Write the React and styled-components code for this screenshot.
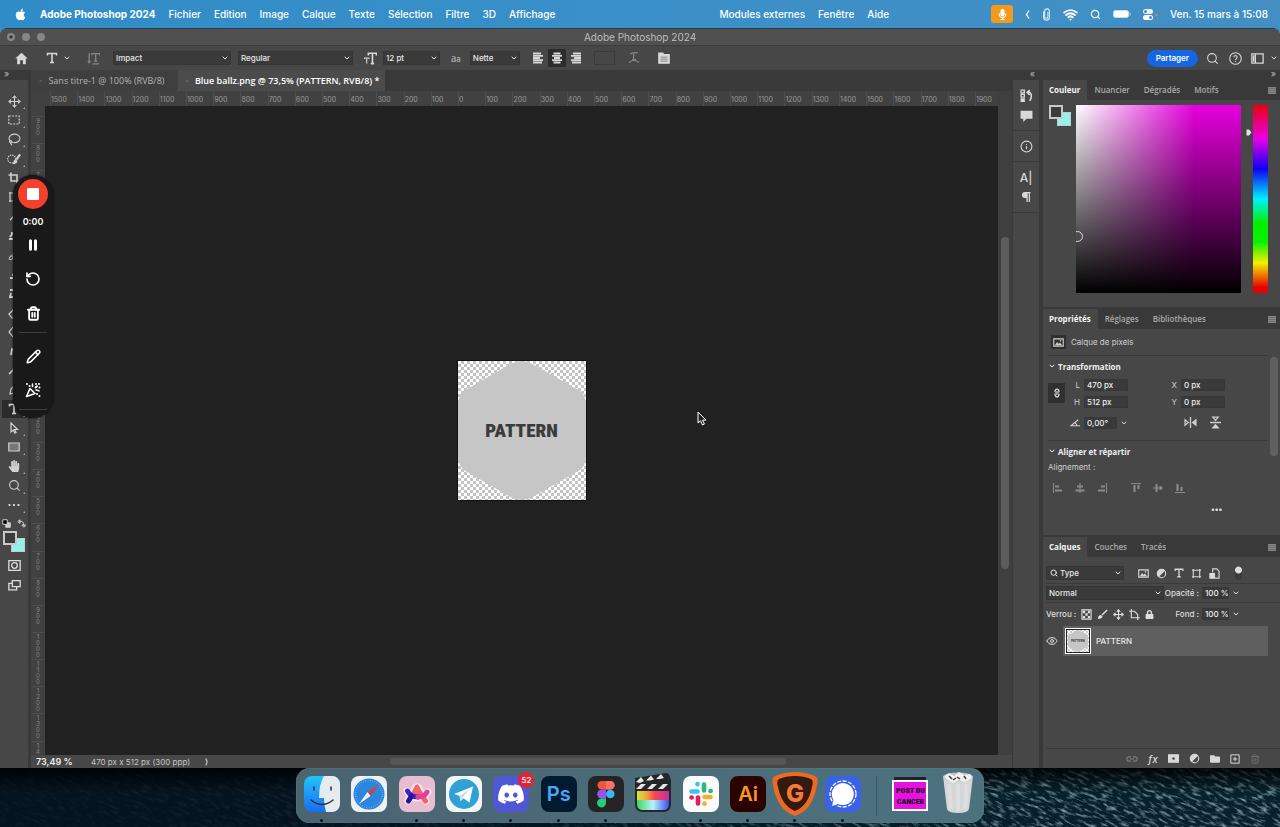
import styled, { createGlobalStyle, css } from "styled-components";
import {
  Brush,
  ChevronDown,
  Eye,
  Info,
  Lasso,
  Move,
  Pencil,
  RotateCcw,
  Search,
  Trash2,
  Wifi,
} from "lucide-react";
import { FaApple, FaDiscord, FaFolder, FaHandPaper, FaLock, FaMicrophone } from "react-icons/fa";

const colors = {
  menu: "#3b91c9",
  title: "#505050",
  panel: "#474747",
  header: "#393939",
  field: "#3a3a3a",
  line: "#3b3b3b",
  canvas: "#212121",
  text: "#dedede",
  muted: "#a9a9a9",
};

const uiFont = `Inter, "Liberation Sans", sans-serif`;
const panelFont = `"Open Sans", "Noto Sans", sans-serif`;
const posterFont = `Impact, "Roboto Condensed", "Open Sans Condensed", Roboto, sans-serif`;

const GlobalStyle = createGlobalStyle`
  * {
    box-sizing: border-box;
  }
  body {
    margin: 0;
    background: #04131d;
    font-family: ${uiFont};
  }
  button, input, select {
    font: inherit;
    color: inherit;
    border: 0;
    margin: 0;
    padding: 0;
    background: none;
    border-radius: 0;
  }
  svg {
    display: block;
    flex: none;
  }
`;

const Desktop = styled.div`
  position: relative;
  display: flex;
  flex-direction: column;
  min-height: 100vh;
  background: ${colors.menu};
  overflow: hidden;
`;

/* ---------- barra de menus ---------- */

const MenuBar = styled.header`
  display: flex;
  align-items: center;
  height: 28px;
  padding: 0 12px 0 14px;
  background: linear-gradient(90deg, #308cc7, #3a90c8 50%, #438fc4);
  color: #fff;
  font-size: 10px;
`;

const MenuGroup = styled.nav`
  display: flex;
  align-items: center;
  gap: 13px;
  margin-left: ${props => (props.$right ? "auto" : "0")};
`;

const MenuItem = styled.button`
  font-weight: ${props => (props.$bold ? 700 : 500)};
  white-space: nowrap;
`;

const StatusArea = styled.div`
  display: flex;
  align-items: center;
  gap: 12px;
  margin-left: 102px;
`;

const MicBadge = styled.button`
  display: grid;
  place-items: center;
  width: 22px;
  height: 18px;
  border-radius: 3px;
  background: #f39a1c;
`;

/* ---------- janela ---------- */

const Window = styled.main`
  flex: 1;
  display: flex;
  flex-direction: column;
  min-height: 0;
  border-radius: 8px 8px 0 0;
  overflow: hidden;
  background: ${colors.header};
  color: ${colors.text};
`;

const TitleBar = styled.div`
  position: relative;
  height: 17px;
  background: ${colors.title};
  border-top: 1px solid #2a3d49;
  color: #bdbdbd;
  font-size: 10px;
  line-height: 17px;
  text-align: center;
`;

const Lights = styled.div`
  position: absolute;
  left: 7px;
  top: 4px;
  display: flex;
  gap: 7px;
`;

const Light = styled.span`
  width: 8px;
  height: 8px;
  border-radius: 50%;
  background: ${props => (props.$dot ? "radial-gradient(#333 20%, #868686 35%)" : "#868686")};
`;

const OptionsBar = styled.div`
  display: flex;
  align-items: center;
  height: 25px;
  padding: 0 2px 0 14px;
  background: ${colors.panel};
  border-top: 1px solid #3d3d3d;
`;

const OptButton = styled.button`
  display: grid;
  place-items: center;
  width: ${props => props.$w || 18}px;
  height: 18px;
  margin-left: ${props => props.$ml || 0}px;
  background: ${props => (props.$on ? "#2c2c2c" : "none")};
  color: ${props => (props.$dim ? "#858585" : "#d8d8d8")};
  font-size: 12px;
  font-weight: 500;
  white-space: nowrap;
`;

const AntiAlias = styled.span`
  display: flex;
  align-items: baseline;
  margin: 0 9px 0 11px;
  color: #bdbdbd;
  font-family: "Liberation Serif", serif;
  font-size: 12px;
  small {
    font-family: ${uiFont};
    font-size: 8px;
  }
`;

const SelectBox = styled.label`
  position: relative;
  display: flex;
  width: ${props => props.$w}px;
  height: 14px;
  margin-left: ${props => props.$ml || 0}px;
  background: ${colors.field};
  border: 1px solid #353535;
  color: #e6e6e6;
  font-size: 8px;
  font-weight: 500;
  select {
    flex: 1;
    min-width: 0;
    padding: 0 12px 0 ${props => props.$pl || 2}px;
    appearance: none;
  }
  svg {
    position: absolute;
    right: 1px;
    top: 2px;
    pointer-events: none;
  }
  svg:first-child {
    left: 3px;
    right: auto;
  }
`;

const ColorChip = styled.button`
  width: 21px;
  height: 14px;
  margin-left: 9px;
  border: 1px solid #3b3b3b;
`;

const ShareButton = styled.button`
  height: 17px;
  margin-left: auto;
  padding: 0 9px;
  border-radius: 9px;
  background: #1566e0;
  color: #fff;
  font-size: 8px;
  font-weight: 600;
`;

const Body = styled.div`
  flex: 1;
  display: flex;
  min-height: 0;
`;

const Strip = styled.div`
  height: 10px;
  padding: 0 4px;
  background: ${colors.header};
  color: #bbb;
  font-size: 9px;
  line-height: 8px;
  text-align: ${props => props.$align || "left"};
`;

const ToolColumn = styled.aside`
  width: 31px;
  flex: none;
  display: flex;
  flex-direction: column;
  border-right: 3px solid ${colors.header};
  background: ${colors.panel};
`;

const Tools = styled.div`
  display: flex;
  flex-direction: column;
  align-items: center;
  justify-content: space-between;
  height: 434px;
  padding-top: 12px;
`;

const ToolButton = styled.button`
  position: relative;
  display: grid;
  place-items: center;
  width: 24px;
  height: 18px;
  color: #d0d0d0;
  background: ${props => (props.$on ? "#2b2b2b" : "none")};
  &::after {
    content: "";
    position: absolute;
    right: 1px;
    bottom: 1px;
    border: 1px solid #aaa;
    border-left-color: transparent;
    border-top-color: transparent;
  }
`;

const ToolExtras = styled.div`
  display: flex;
  flex-direction: column;
  align-items: center;
  gap: 7px;
  padding-top: 5px;
`;

const MiniRow = styled.div`
  display: flex;
  gap: 6px;
  margin-bottom: -4px;
`;

const Swatches = styled.div`
  display: grid;
  grid-template-columns: 8px 6px 8px;
  grid-template-rows: 7px 7px 7px;
`;

const Swatch = styled.button`
  border: ${props => (props.$front ? "2px solid #c9c9c9" : "1px solid #c9c9c9")};
  background: ${props => (props.$front ? "#3b3b3b" : "#93f3ea")};
  grid-column: ${props => (props.$front ? "1 / 3" : "2 / 4")};
  grid-row: ${props => (props.$front ? "1 / 3" : "2 / 4")};
  z-index: ${props => (props.$front ? 1 : 0)};
`;

/* ---------- documento ---------- */

const Center = styled.section`
  flex: 1;
  min-width: 0;
  display: flex;
  flex-direction: column;
`;

const DocTabs = styled.div`
  display: flex;
  height: 21px;
  background: ${colors.header};
  font-family: ${panelFont};
  font-size: 9px;
`;

const DocTab = styled.button`
  display: flex;
  align-items: center;
  gap: 6px;
  padding: 0 ${props => (props.$on ? "6px 0 7px" : "14px 0 8px")};
  background: ${props => (props.$on ? "#4b4b4b" : "#3f3f3f")};
  color: ${props => (props.$on ? "#fff" : "#b4b4b4")};
  font-weight: ${props => (props.$on ? 600 : 500)};
  white-space: nowrap;
  i {
    color: #777;
    font-style: normal;
    font-size: 6px;
  }
`;

const Workspace = styled.div`
  flex: 1;
  display: grid;
  grid-template-columns: 14px 1fr 14px;
  grid-template-rows: 15px 1fr 13px;
  min-height: 0;
  background: #424242;
`;

const RulerX = styled.div`
  display: flex;
  grid-column: 1 / 3;
  padding-left: 19px;
  background: #414141;
  overflow: hidden;
  color: #9a9a9a;
  font-size: 7px;
  line-height: 18px;
  span {
    flex: 20 1 0;
    min-width: 0;
    border-left: 1px solid #4d4d4d;
    white-space: nowrap;
  }
  span:last-child {
    flex-grow: 17;
  }
`;

const RulerY = styled.div`
  display: flex;
  flex-direction: column;
  padding-top: 10px;
  background: #414141;
  overflow: hidden;
  color: #858585;
  font-size: 6px;
  line-height: 6px;
  text-align: center;
  span {
    flex: 2 1 0;
    min-height: 0;
    border-top: 1px solid #4d4d4d;
    padding: 1px 5px 0;
    word-break: break-all;
  }
  span:last-child {
    flex-grow: 1;
  }
`;

const Canvas = styled.div`
  position: relative;
  display: grid;
  place-items: center;
  background: ${colors.canvas};
`;

const Artboard = styled.div`
  display: grid;
  place-items: center;
  width: 130px;
  height: 141px;
  border: 1px solid #111;
  background: repeating-conic-gradient(#c3c3c3 0 25%, #fff 0 50%) 0 0 / 6px 6px;
  > * {
    grid-area: 1 / 1;
  }
`;

const PatternWord = styled.span`
  color: #3b3b3b;
  font-family: ${posterFont};
  font-size: 19px;
  font-weight: 900;
`;

const Pointer = styled.svg`
  position: absolute;
  left: 68%;
  top: 47%;
  margin-left: 4px;
`;

const ScrollY = styled.div`
  grid-row: 1 / 3;
  grid-column: 3;
  padding: 146px 3px 0;
  background: #3f3f3f;
  div {
    width: 8px;
    height: 332px;
    border-radius: 4px;
    background: #5c5c5c;
  }
`;

const StatusBar = styled.footer`
  grid-column: 1 / 4;
  display: flex;
  align-items: center;
  padding-left: 5px;
  background: ${colors.panel};
  color: #c4c4c4;
  font-size: 8px;
  b {
    width: 55px;
    color: #eee;
    font-size: 9px;
    font-weight: 600;
  }
  svg {
    margin-left: 13px;
  }
`;

const ScrollX = styled.div`
  flex: 1;
  display: flex;
  margin-left: 7px;
  padding: 0 226px 0 172px;
  div {
    flex: 1;
    height: 7px;
    border-radius: 4px;
    background: #575757;
  }
`;

/* ---------- paineis ---------- */

const IconDock = styled.aside`
  flex: none;
  width: 31px;
  border-right: 4px solid ${colors.header};
  border-left: 1px solid ${colors.header};
  background: ${colors.panel};
`;

const DockGroup = styled.div`
  display: flex;
  flex-direction: column;
  align-items: center;
  gap: 2px;
  padding: 6px 0;
  border-bottom: 1px solid #3a3a3a;
`;

const Panels = styled.aside`
  flex: none;
  width: 237px;
  display: flex;
  flex-direction: column;
  gap: 2px;
  background: ${colors.header};
  font-size: 8px;
`;

const Panel = styled.section`
  flex: ${props => (props.$grow ? "1" : "none")};
  display: flex;
  flex-direction: column;
  background: ${colors.panel};
`;

const PanelTabs = styled.div`
  display: flex;
  height: 20px;
  padding-right: 4px;
  background: ${colors.header};
  font-family: ${panelFont};
  align-items: stretch;
  svg {
    margin: auto 0 auto auto;
  }
`;

const PanelTab = styled.button`
  padding: 0 7px 1px ${props => (props.$on ? 6 : 7)}px;
  font-size: 8px;
  font-weight: ${props => (props.$on ? 700 : 600)};
  color: ${props => (props.$on ? "#f4f4f4" : colors.muted)};
  background: ${props => (props.$on ? colors.panel : "none")};
`;

const ColorBody = styled.div`
  display: flex;
  align-items: flex-start;
  height: 207px;
  padding: 5px 12px 0 6px;
`;

const ColorField = styled.div`
  position: relative;
  flex: 1;
  height: 188px;
  margin: 0 8px 0 5px;
  overflow: hidden;
  background: linear-gradient(transparent, #000), linear-gradient(90deg, #fff, #e600dc 72%);
  &::after {
    content: "";
    position: absolute;
    left: -4px;
    top: 126px;
    width: 9px;
    height: 9px;
    border: 1px solid #ddd;
    border-radius: 50%;
  }
`;

const HueArrow = styled.svg`
  margin: 24px 0 0 -3px;
`;

const Hue = styled.div`
  width: 15px;
  height: 188px;
  margin-left: 1px;
  background: linear-gradient(#e8000c, #e800e8 18%, #1000f0 34%, #00f0ff 50%, #00f000 63%, #0cf000 73%, #f2f000 84%, #e80000 97%);
`;

const PropsBody = styled.div`
  position: relative;
  height: 206px;
  padding: 0 12px 0 5px;
  color: #cfcfcf;
`;

const Row = styled.div`
  display: flex;
  align-items: center;
  height: ${props => props.$h || 18}px;
  gap: ${props => props.$gap || 0}px;
  padding-left: ${props => props.$pl || 0}px;
  border-bottom: ${props => (props.$line ? `1px solid ${colors.line}` : "0")};
`;

const SectionTitle = styled.button`
  display: flex;
  align-items: center;
  gap: 2px;
  height: 20px;
  color: #eee;
  font-family: ${panelFont};
  font-size: 8px;
  font-weight: 700;
`;

const TypeIcon = styled.span`
  display: grid;
  place-items: center;
  width: 15px;
  height: 14px;
  background: #303030;
`;

const Transform = styled.div`
  display: grid;
  grid-template-columns: 18px 62px 35px 62px;
  grid-template-rows: 17px 17px 25px;
  align-items: center;
  align-content: start;
  height: 64px;
`;

const LinkButton = styled.button`
  grid-row: 1 / 3;
  display: grid;
  place-items: center;
  width: 17px;
  height: 20px;
  background: #303030;
`;

const Field = styled.label`
  display: flex;
  align-items: center;
  justify-content: flex-end;
  gap: ${props => props.$gap || 4}px;
  grid-column: ${props => props.$col || "auto"};
  margin: ${props => (props.$end ? "0 40px 0 auto" : "0")};
  input {
    width: ${props => props.$w || 44}px;
    height: 12px;
    padding-left: 2px;
    border: 1px solid #373737;
    background: ${colors.field};
    color: #eee;
    font-size: 8px;
    font-weight: 500;
  }
`;

const FlipRow = styled.div`
  grid-column: 4;
  display: flex;
  gap: 12px;
  padding-left: 21px;
`;

const AlignRow = styled.div`
  display: flex;
  gap: 10px;
  height: 32px;
  padding-left: 4px;
  align-items: center;
  color: #8b8b8b;
  svg:nth-child(4) {
    margin-left: 12px;
  }
`;

const More = styled.button`
  display: block;
  margin-left: 163px;
  color: #ddd;
  font-size: 8px;
  font-weight: 700;
`;

const PanelScroll = styled.div`
  position: absolute;
  right: 2px;
  top: 28px;
  width: 8px;
  height: 99px;
  border-radius: 4px;
  background: #606060;
`;

const LayersBody = styled.div`
  flex: 1;
  display: flex;
  flex-direction: column;
  padding: 6px 0 0 3px;
  font-weight: 500;
`;

const Filters = styled.div`
  display: flex;
  align-items: center;
  gap: 7px;
  margin-left: 14px;
  color: #d8d8d8;
`;

const FilterToggle = styled.button`
  width: 7px;
  height: 14px;
  margin-left: 8px;
  border-radius: 3px;
  background: radial-gradient(circle at 50% 4px, #ddd 3px, #3a3a3a 4px);
`;

const Layer = styled.div`
  display: flex;
  align-items: center;
  height: 30px;
  margin: 1px 12px 0 0;
`;

const LayerMain = styled.button`
  flex: 1;
  display: flex;
  align-items: center;
  gap: 5px;
  height: 30px;
  margin-left: 5px;
  padding-left: 2px;
  background: #5f5f5f;
  color: #e8e8e8;
`;

const Thumb = styled.span`
  display: grid;
  place-items: center;
  width: 26px;
  height: 26px;
  border: 1px solid #fff;
  outline: 1px solid #222;
  outline-offset: -2px;
  background: repeating-conic-gradient(#ccc 0 25%, #fff 0 50%) 0 0 / 4px 4px;
  > * {
    grid-area: 1 / 1;
  }
  small {
    color: #333;
    font-size: 3px;
    font-weight: 700;
  }
`;

const LayerFooter = styled.div`
  display: flex;
  align-items: center;
  justify-content: flex-end;
  gap: 10px;
  height: 20px;
  margin-top: auto;
  padding-right: 20px;
  border-top: 1px solid ${colors.line};
  color: #d8d8d8;
`;

const Fx = styled.button`
  width: 10px;
  font-size: 10px;
  font-style: italic;
`;

/* ---------- gravador ---------- */

const Recorder = styled.div`
  position: absolute;
  left: 13px;
  top: 175px;
  z-index: 2;
  display: flex;
  flex-direction: column;
  align-items: center;
  width: 40px;
  padding: 4px 0 2px;
  border-radius: 20px;
  background: #191919;
  box-shadow: 0 0 2px #000;
  color: #fff;
  hr {
    width: 28px;
    height: 1px;
    margin: 2px 0 6px;
    border: 0;
    background: #3d3d3d;
  }
`;

const RecordButton = styled.button`
  display: grid;
  place-items: center;
  width: 30px;
  height: 30px;
  border-radius: 50%;
  background: #f5402c;
  &::after {
    content: "";
    width: 12px;
    height: 12px;
    border-radius: 1px;
    background: #fff;
  }
`;

const Timer = styled.span`
  height: 15px;
  margin-top: 4px;
  font-size: 9px;
  font-weight: 600;
  line-height: 17px;
`;

const RecButton = styled.button`
  display: grid;
  place-items: center;
  width: 34px;
  height: 34px;
`;

/* ---------- dock ---------- */

const DockArea = styled.div`
  position: relative;
  display: flex;
  justify-content: center;
  height: 59px;
  background: linear-gradient(90deg, #03131f, #051c29 50%, #07222d);
`;

const Water = styled.svg`
  position: absolute;
  inset: 0;
  width: 100%;
  height: 100%;
`;

const Dock = styled.nav`
  position: relative;
  display: flex;
  justify-content: space-between;
  width: 688px;
  max-width: 96%;
  height: 55px;
  padding: 8px 8px 0;
  border-radius: 14px;
  background: linear-gradient(90deg, #4a6470, #4b6c78 50%, #4c7280);
  box-shadow: inset 0 0 1px #8aa;
`;

const DockApp = styled.button`
  position: relative;
  width: 36px;
  height: 36px;
  border-radius: 8px;
  background: ${props => props.$bg || "none"};
  color: ${props => props.$fg || "#fff"};
  font-size: 20px;
  font-weight: 600;
  line-height: 36px;
  text-align: center;
  text-decoration: none;
  svg {
    width: 100%;
    height: 100%;
    overflow: visible;
  }
  ${props =>
    props.$open &&
    css`
      &::after {
        content: "";
        position: absolute;
        left: 16px;
        top: 43px;
        width: 3px;
        height: 3px;
        border-radius: 50%;
        background: #0a0f12;
      }
    `}
`;

const DiscordFace = styled(FaDiscord)`
  padding: 4px;
`;

const Badge = styled.span`
  position: absolute;
  right: -5px;
  top: -4px;
  width: 16px;
  height: 16px;
  border-radius: 50%;
  background: #df2438;
  color: #fff;
  font-size: 8px;
  font-weight: 500;
  line-height: 16px;
`;

const DockRule = styled.span`
  width: 1px;
  height: 40px;
  margin: 0 4px;
  background: #3a5664;
`;

const Poster = styled.span`
  display: block;
  margin-top: 4px;
  border: 2px solid #fff;
  background: #e812e0;
  color: #1c0a1c;
  font-family: ${posterFont};
  font-size: 8px;
  font-weight: 900;
  line-height: 11px;
  padding: 3px 0 2px;
  white-space: nowrap;
  box-shadow: 0 -5px 0 -2px #222;
`;

const Chevron = ({ size = 8 }) => <ChevronDown size={size} strokeWidth={3} />;

const Glyph = ({ size = 12, children, ...rest }) => (
  <svg
    width={size}
    height={size}
    viewBox="0 0 12 12"
    fill="none"
    stroke="currentColor"
    strokeWidth="1.2"
    {...rest}
  >
    {children}
  </svg>
);

const MenuIcon = () => (
  <svg width="8" height="7" viewBox="0 0 8 7">
    <path d="M0 0h8v7H0z" fill="#707070" />
    <path d="M0 .5h8M0 2.5h8M0 4.5h8M0 6.5h8" stroke="#858585" />
  </svg>
);

const TypeT = ({ size = 12 }) => (
  <Glyph size={size}>
    <path d="M1.5 3.5V1.5h9v2M6 1.5v9M4 10.5h4" strokeWidth="1.6" />
  </Glyph>
);

const lines = {
  left: "M1 1.5h8M1 3.8h10M1 6h7M1 8.2h10M1 10.5h9",
  center: "M2.5 1.5h7M1 3.8h10M3 6h6M1 8.2h10M2.5 10.5h7",
  right: "M3 1.5h8M1 3.8h10M4 6h7M1 8.2h10M2 10.5h9",
};

const TextLines = ({ align }) => (
  <Glyph>
    <path d={lines[align]} strokeWidth="1.8" />
  </Glyph>
);

const CircleHalf = ({ size = 11 }) => (
  <Glyph size={size}>
    <circle cx="6" cy="6" r="4.6" />
    <path d="M2.8 9.2A4.6 4.6 0 0 1 9.2 2.8z" fill="currentColor" />
  </Glyph>
);

const Picture = ({ size = 11 }) => (
  <Glyph size={size}>
    <path d="M.8 2h10.4v8H.8z" />
    <path d="M2 9l2.5-3.5L6.2 7.6 7.6 6 10 9z" fill="currentColor" stroke="none" />
    <circle cx="8.2" cy="4.2" r=".9" fill="currentColor" stroke="none" />
  </Glyph>
);

const LinkGlyph = ({ dim }) => (
  <Glyph size={12} color={dim ? "#7c7c7c" : "#ddd"}>
    {dim ? (
      <path d="M5 3.8H3a2.2 2.2 0 0 0 0 4.4h2M7 3.8h2a2.2 2.2 0 0 1 0 4.4H7M4 6h4" />
    ) : (
      <path d="M4.5 5.5a2 2 0 1 1 3 0M4.500 6.500a2 2 0 1 0 3 0M6 4v4" />
    )}
  </Glyph>
);

const AlignIcon = ({ d }) => (
  <Glyph size={12}>
    <path d={d} strokeWidth="1.1" />
  </Glyph>
);

const Hexagon = ({ width, height }) => (
  <svg width={width} height={height} viewBox="0 0 127 138">
    <path
      d="M52 3Q63-3 74 3L120 29Q127 34 127 43V95Q127 104 120 109L74 135Q63 141 52 135L7 109Q0 104 0 95V43Q0 34 7 29Z"
      fill="#c6c6c6"
    />
  </svg>
);

const tools = [
  ["Déplacement", <Move size={13} />],
  ["Rectangle de sélection", <Glyph><path d="M.8 2h10.4v8H.8z" strokeDasharray="2 1.2" /></Glyph>],
  ["Lasso", <Lasso size={13} />],
  ["Sélection rapide", <Glyph size={14}><circle cx="4" cy="6" r="3.4" strokeDasharray="1.2 .8" strokeWidth="1" /><path d="M8 6.5L11.200 2" strokeWidth="2" /><path d="M5 10.500q.5-4 2.500-4l1.500 1.300q-.5 2.700-4 2.700z" fill="currentColor" stroke="none" /></Glyph>],
  ["Recadrage", <Glyph><path d="M3 .5V9h8.5M.5 3H9v8.5" strokeWidth="1.6" /></Glyph>],
  ["Cadre", <Glyph><path d="M2 1v10M10 1v10M1 2h10M1 10h10" /></Glyph>],
  ["Pipette", <Glyph><path d="M2 10l5-5M6 3l3 3M8 4l2-2" /></Glyph>],
  ["Correcteur", <Glyph><path d="M1 9h5M2 7l3-4M3 3h4" strokeWidth="2" /></Glyph>],
  ["Pinceau", <Brush size={12} />],
  ["Tampon", <Glyph><path d="M2 10h8M4 7h4M6 7V3" strokeWidth="2" /></Glyph>],
  ["Forme d'historique", <Glyph><path d="M2 3h5M3 6l-1 4h4" strokeWidth="1.8" /></Glyph>],
  ["Gomme", <Glyph><path d="M1 7l5-5 4 4-5 5H4z" /></Glyph>],
  ["Dégradé", <Glyph><path d="M5 1L1 6l4 5" /></Glyph>],
  ["Doigt", <Glyph><path d="M3 10l1-6 4 3" strokeWidth="1.8" /></Glyph>],
  ["Densité", <Glyph><path d="M1 10l5-5" strokeWidth="1.6" /></Glyph>],
  ["Plume", <Glyph><path d="M2 10l1-5 3-3 3 3-3 4z" /></Glyph>],
  ["Texte", <TypeT />, true],
  ["Sélection de tracé", <Glyph><path d="M3 1v9l2.3-2 1.6 3.2 1.2-.6L6.6 7.5h3z" /></Glyph>],
  ["Rectangle", <Glyph><path d="M.8 2h10.4v8H.8z" fill="#777" /></Glyph>],
  ["Main", <FaHandPaper size={12} />],
  ["Zoom", <Search size={13} />],
  ["Autres outils", <Glyph><path d="M.5 6h2M5 6h2M9.5 6h2" strokeWidth="2" /></Glyph>],
];

const rulerX = Array.from({ length: 35 }, (_, i) => Math.abs(i - 15) * 100);
// the last mark only has room for its first two digits
const rulerY = Array.from({ length: 24 }, (_, i) => String(Math.abs(i - 9) * 100)).map((n, i) =>
  i === 23 ? n.slice(0, 2) : n
);

const menus = ["Fichier", "Edition", "Image", "Calque", "Texte", "Sélection", "Filtre", "3D", "Affichage"];

const alignIcons = [
  "M1.5 1v10M3 4h4M3 5h4M3 8h7M3 9h7",
  "M6 1v10M3 4h6M3 5h6M1.5 8h9M1.5 9h9",
  "M10.5 1v10M5 4h4M5 5h4M2 8h7M2 9h7",
  "M1 1.5h10M4 3v7M5 3v7M8 3v4M9 3v4",
  "M1 6h10M4 2v8M5 2v8M8 4v4M9 4v4",
  "M1 10.5h10M3 2v7M4 2v7M7 5v4M8 5v4",
];

const SelectField = ({ label, value, w, ml, pl, icon }) => (
  <SelectBox $w={w} $ml={ml} $pl={pl}>
    {icon}
    <select aria-label={label} defaultValue={value}>
      <option>{value}</option>
    </select>
    <Chevron />
  </SelectBox>
);

const ColorPair = () => (
  <Swatches>
    <Swatch $front aria-label="Premier plan" />
    <Swatch aria-label="Arrière-plan" />
  </Swatches>
);

const TopMenu = () => (
  <MenuBar>
    <MenuGroup>
      <FaApple size={13} />
      <MenuItem $bold>Adobe Photoshop 2024</MenuItem>
      {menus.map(m => (
        <MenuItem key={m}>{m}</MenuItem>
      ))}
    </MenuGroup>
    <MenuGroup $right>
      <MenuItem>Modules externes</MenuItem>
      <MenuItem>Fenêtre</MenuItem>
      <MenuItem>Aide</MenuItem>
    </MenuGroup>
    <StatusArea>
      <MicBadge aria-label="Micro">
        <FaMicrophone size={11} />
      </MicBadge>
      <svg width="5" height="9" viewBox="0 0 5 9" fill="none" stroke="#fff" strokeWidth="1.3">
        <path d="M4 .5L1.500 4.500 4 8.500" />
      </svg>
      <svg width="9" height="13" viewBox="0 0 7 12" fill="none" stroke="#d6e8f5">
        <path d="M.8 3v5.500a2.700 2.700 0 0 0 5.400 0V3a2.200 2.200 0 0 0-4.400 0v5a1.500 1.500 0 0 0 3 0V3.500" />
      </svg>
      <Wifi size={15} strokeWidth={3} />
      <Search size={11} strokeWidth={2.5} />
      <svg width="18" height="8" viewBox="0 0 18 8">
        <rect x=".5" y=".5" width="15" height="7" rx="2" fill="#fff" stroke="#c5ddec" />
        <path d="M17 2.500v3" stroke="#b7d4e8" />
      </svg>
      <svg width="15" height="11" viewBox="0 0 15 11">
        <rect x="0" y="0" width="10" height="5" rx="2.500" fill="#e9f3fa" />
        <rect x="0" y="6" width="10" height="5" rx="2.500" fill="#fff" />
        <circle cx="2.500" cy="2.500" r="1.500" fill="#3b8fc6" />
        <circle cx="7.500" cy="8.500" r="1.500" fill="#3b8fc6" />
        <circle cx="13.500" cy="6" r="1.200" fill="#e08a35" />
      </svg>
      <MenuItem>Ven. 15 mars à 15:08</MenuItem>
    </StatusArea>
  </MenuBar>
);

const Options = () => (
  <OptionsBar>
    <OptButton $w={14} aria-label="Accueil">
      <Glyph size={13}>
        <path d="M6 .8L11.700 6H10v5.200H7.300V7.500H4.700v3.700H2V6H.3z" fill="currentColor" stroke="none" />
      </Glyph>
    </OptButton>
    <OptButton $w={22} $ml={13} aria-label="Outil texte">
      <TypeT size={12} />
    </OptButton>
    <Chevron />
    <OptButton $ml={13} $dim aria-label="Orientation du texte">
      <Glyph size={13}>
        <path d="M2 1v9M.8 8.500L2 10l1.200-1.500M4.500 3V1.500h7V3M8 1.500v7M6.500 8.500h3M5 11h6" />
      </Glyph>
    </OptButton>
    <SelectField label="Police" value="Impact" w={118} ml={11} />
    <SelectField label="Style" value="Regular" w={115} ml={7} />
    <OptButton $ml={8} aria-label="Corps">
      <Glyph size={13}>
        <path d="M4 3.200V1.200h7.500v2M7.800 1.200v9.500M6.300 10.700h3" strokeWidth="1.500" />
        <path d="M.5 6.500V5.500h4v1M2.500 5.500v5" strokeWidth="1" />
      </Glyph>
    </OptButton>
    <SelectField label="Taille" value="12 pt" w={57} ml={4} />
    <AntiAlias>
      a<small>a</small>
    </AntiAlias>
    <SelectField label="Lissage" value="Nette" w={50} />
    <OptButton $ml={9} aria-label="Gauche">
      <TextLines align="left" />
    </OptButton>
    <OptButton $on $ml={1} aria-label="Centre">
      <TextLines align="center" />
    </OptButton>
    <OptButton $ml={1} aria-label="Droite">
      <TextLines align="right" />
    </OptButton>
    <ColorChip aria-label="Couleur du texte" />
    <OptButton $ml={10} $dim aria-label="Déformer">
      <Glyph>
        <path d="M2 2q4-2 8-1M6 1.500Q5 5 6 8M1 10.500q5-4 10 0M4 7.500h4" />
      </Glyph>
    </OptButton>
    <OptButton $ml={12} aria-label="Panneaux">
      <Glyph>
        <path d="M.8 1h4l1 1.500h5.400v8.700H.8z" fill="currentColor" />
        <path d="M2.500 5.200h7M2.500 7.200h7M2.500 9.200h7" stroke="#777" strokeWidth=".8" />
      </Glyph>
    </OptButton>
    <ShareButton>Partager</ShareButton>
    <OptButton $ml={5} aria-label="Rechercher">
      <Search size={13} />
    </OptButton>
    <OptButton $ml={5} aria-label="Aide">
      <Glyph size={13}>
        <circle cx="6" cy="6" r="5.300" strokeWidth="1" />
        <path d="M4.500 4.800a1.500 1.500 0 1 1 2.200 1.400Q6 6.600 6 7.300M6 8.300v1" strokeWidth="1" />
      </Glyph>
    </OptButton>
    <OptButton $ml={4} aria-label="Espace de travail">
      <Glyph size={13}>
        <path d="M.8 1.800h10.400v8.400H.8zM4 2v8M2.400 3v6" />
      </Glyph>
    </OptButton>
    <OptButton $w={8} $ml={4} aria-label="Plus">
      <Chevron />
    </OptButton>
  </OptionsBar>
);

const ColorPanel = () => (
  <Panel>
    <PanelTabs>
      <PanelTab $on>Couleur</PanelTab>
      <PanelTab>Nuancier</PanelTab>
      <PanelTab>Dégradés</PanelTab>
      <PanelTab>Motifs</PanelTab>
      <MenuIcon />
    </PanelTabs>
    <ColorBody>
      <ColorPair />
      <ColorField />
      <HueArrow width="6" height="7" viewBox="0 0 6 7">
        <path d="M.5 .5h2.500L5.500 3.500 3 6.500H.5z" fill="#e4e4e4" />
      </HueArrow>
      <Hue />
    </ColorBody>
  </Panel>
);

const PropertiesPanel = () => (
  <Panel>
    <PanelTabs>
      <PanelTab $on>Propriétés</PanelTab>
      <PanelTab>Réglages</PanelTab>
      <PanelTab>Bibliothèques</PanelTab>
      <MenuIcon />
    </PanelTabs>
    <PropsBody>
      <Row $h={27} $gap={5} $pl={3} $line>
        <TypeIcon>
          <Picture />
        </TypeIcon>
        Calque de pixels
      </Row>
      <SectionTitle>
        <Chevron /> Transformation
      </SectionTitle>
      <Transform>
        <LinkButton aria-label="Lier">
          <LinkGlyph />
        </LinkButton>
        <Field>
          L <input defaultValue="470 px" />
        </Field>
        <Field $col="4">
          X <input defaultValue="0 px" />
        </Field>
        <Field $col="2">
          H <input defaultValue="512 px" />
        </Field>
        <Field $col="4">
          Y <input defaultValue="0 px" />
        </Field>
        <Field $col="2" $w={33} $gap={3}>
          <Glyph size={11}>
            <path d="M11 9.500H1L9 3M5 6.200q2.500 1 2.500 3.300" />
          </Glyph>
          <input aria-label="Angle" defaultValue="0,00°" />
          <Chevron />
        </Field>
        <FlipRow>
          <Glyph size={13}>
            <path d="M6 1v10M1 3.500v5L4 6z" />
            <path d="M11 3.500v5L8 6z" fill="currentColor" />
          </Glyph>
          <Glyph size={13}>
            <path d="M1 6h10M3.500 1h5L6 4z" />
            <path d="M3.500 11h5L6 8z" fill="currentColor" />
          </Glyph>
        </FlipRow>
      </Transform>
      <Row $h={1} $line />
      <SectionTitle>
        <Chevron /> Aligner et répartir
      </SectionTitle>
      <Row $h={11}>Alignement :</Row>
      <AlignRow>
        {alignIcons.map(d => (
          <AlignIcon key={d} d={d} />
        ))}
      </AlignRow>
      <More>•••</More>
      <PanelScroll />
    </PropsBody>
  </Panel>
);

const LayersPanel = () => (
  <Panel $grow>
    <PanelTabs>
      <PanelTab $on>Calques</PanelTab>
      <PanelTab>Couches</PanelTab>
      <PanelTab>Tracés</PanelTab>
      <MenuIcon />
    </PanelTabs>
    <LayersBody>
      <Row $h={21} $line>
        <SelectField label="Filtre" value="Type" w={78} pl={13} icon={<Search size={8} strokeWidth={3} />} />
        <Filters>
          <Picture />
          <CircleHalf />
          <TypeT size={10} />
          <Glyph size={11}>
            <path d="M2.500 1v10M9.500 1v10M1 2.500h10M1 9.500h10" />
          </Glyph>
          <Glyph size={11}>
            <path d="M4 5V1h4.500L11 3.500V11H6" />
            <path d="M1 6h5v5H1z" fill="currentColor" />
          </Glyph>
          <FilterToggle aria-label="Activer le filtre" />
        </Filters>
      </Row>
      <Row $h={19} $line>
        <SelectField label="Mode de fusion" value="Normal" w={118} />
        <Field $w={27} $gap={3} $end>
          Opacité : <input defaultValue="100 %" /> <Chevron />
        </Field>
      </Row>
      <Row $h={22} $gap={5}>
        <span>Verrou :</span>
        <Glyph size={11}>
          <path d="M1 1h10v10H1z" />
          <path d="M2 2h2.500v2.500H2zM7.500 2H10v2.500H7.500zM4.700 4.700h2.600v2.600H4.700zM2 7.500h2.500V10H2zM7.500 7.500H10V10H7.500z" fill="currentColor" stroke="none" />
        </Glyph>
        <Glyph size={11}>
          <path d="M11 1L5.500 6.500" strokeWidth="1.600" />
          <path d="M1 11q0-4.500 3.500-4.500L6 8q-.5 3-5 3z" fill="currentColor" stroke="none" />
        </Glyph>
        <Move size={11} strokeWidth={2.5} />
        <Glyph size={11}>
          <path d="M2.500 0v9.500H12M0 2.500h6l3.500 3.500V12" />
        </Glyph>
        <FaLock size={9} />
        <Field $w={27} $gap={3} $end>
          Fond : <input defaultValue="100 %" /> <Chevron />
        </Field>
      </Row>
      <Layer>
        <Eye size={12} />
        <LayerMain>
          <Thumb>
            <Hexagon width="20" height="22" />
            <small>PATTERN</small>
          </Thumb>
          PATTERN
        </LayerMain>
      </Layer>
      <LayerFooter>
        <LinkGlyph dim />
        <Fx>fx</Fx>
        <Glyph size={11}>
          <path d="M.5 2h11v8H.5zM6 4a2 2 0 1 0 .01 0z" fill="currentColor" fillRule="evenodd" />
        </Glyph>
        <CircleHalf />
        <FaFolder size={10} />
        <Glyph size={10}>
          <path d="M1 1h10v10H1zM6 3.500v5M3.500 6h5" />
        </Glyph>
        <Trash2 size={10} color="#747474" />
      </LayerFooter>
    </LayersBody>
  </Panel>
);

const ScreenRecorder = () => (
  <Recorder>
    <RecordButton aria-label="Arrêter" />
    <Timer>0:00</Timer>
    <RecButton aria-label="Pause">
      <Glyph size={12}>
        <path d="M3.500 1.700v8.600M8.500 1.700v8.600" strokeWidth="3" strokeLinecap="round" />
      </Glyph>
    </RecButton>
    <RecButton aria-label="Recommencer">
      <RotateCcw size={16} strokeWidth={2.5} />
    </RecButton>
    <RecButton aria-label="Supprimer">
      <Trash2 size={15} strokeWidth={3} />
    </RecButton>
    <hr />
    <RecButton aria-label="Dessiner">
      <Pencil size={15} strokeWidth={2.5} />
    </RecButton>
    <RecButton aria-label="Confettis">
      <svg width="16" height="16" viewBox="0 0 16 16" fill="none" stroke="#fff" strokeWidth="1.600" strokeLinejoin="round" strokeLinecap="round">
        <path d="M1.500 14.500L5 6.500l5 5zM7.500 4.500V2M11 8q2 0 3 1" />
        <path d="M2 2h.01M4.500 4h.01M11 2h.01M14 2h.01M10.500 5.500L12 4.200M14.500 5.500h.01M12 12h.01M14.500 14h.01" strokeWidth="2" />
      </svg>
    </RecButton>
    <hr />
  </Recorder>
);

const AppDock = () => (
  <DockArea>
    <Water preserveAspectRatio="none" aria-hidden="true">
      <defs>
        <filter id="waves" x="0" y="0" width="100%" height="100%">
          <feTurbulence type="fractalNoise" baseFrequency="0.1 0.36" numOctaves="3" seed="4" />
          <feColorMatrix values="0 0 0 0 .34  0 0 0 0 .5  0 0 0 0 .55  0 2.400 0 0 -1.150" />
        </filter>
        <linearGradient id="fade">
          <stop offset="0" stopColor="#03131f" stopOpacity=".94" />
          <stop offset=".4" stopColor="#03131f" stopOpacity=".84" />
          <stop offset=".8" stopColor="#03131f" stopOpacity="0" />
        </linearGradient>
        <linearGradient id="shade" x2="0" y2="1">
          <stop offset="0" stopColor="#000" stopOpacity=".9" />
          <stop offset=".4" stopColor="#000" stopOpacity="0" />
        </linearGradient>
      </defs>
      <g transform="rotate(24 1100 30)">
        <rect x="-100" y="-500" width="1600" height="1000" filter="url(#waves)" />
      </g>
      <rect width="100%" height="100%" fill="url(#fade)" />
      <rect width="100%" height="100%" fill="url(#shade)" />
    </Water>
    <Dock>
      <DockApp $open aria-label="Finder">
        <svg viewBox="0 0 36 36">
          <defs>
            <linearGradient id="finder" x2="0" y2="1">
              <stop stopColor="#20c4fb" />
              <stop offset="1" stopColor="#1b6df0" />
            </linearGradient>
          </defs>
          <rect width="36" height="36" rx="8" fill="url(#finder)" />
          <path d="M20 0h8a8 8 0 0 1 8 8v20a8 8 0 0 1-8 8h-6q-2-7-2-14h-5Q15 8 20 0z" fill="#e6ebf0" />
          <path d="M10 11v3M27 11v3M7 24q11 9 22 0" fill="none" stroke="#20303d" strokeWidth="1.500" strokeLinecap="round" />
        </svg>
      </DockApp>
      <DockApp $bg="#eef1f4" aria-label="Safari">
        <svg viewBox="0 0 36 36">
          <circle cx="18" cy="18" r="15.500" fill="#2b86dd" />
          <circle cx="18" cy="18" r="13.500" fill="none" stroke="#8fc2ee" strokeDasharray=".5 1.800" strokeWidth="1.500" />
          <path d="M28 8L16.500 16l3 4z" fill="#d8403c" />
          <path d="M8 28l8.500-12 3 4z" fill="#f5f5f5" />
        </svg>
      </DockApp>
      <DockApp $open $bg="#e8bdd0" aria-label="Arc">
        <svg viewBox="0 0 36 36" fill="none" strokeLinecap="round" strokeLinejoin="round">
          <path d="M9 25l8-14h2l8 14M8 15q4 8 11 7 7-1 10-6" stroke="#f8e6ee" strokeWidth="7" />
          <path d="M18 11l-3.500 7h7z" stroke="#f4686c" fill="#f4686c" strokeWidth="5" />
          <path d="M21 17l5.500 8" stroke="#f4606c" strokeWidth="5" />
          <path d="M8.500 15q3 6 10.500 6" stroke="#3d22d0" strokeWidth="5" />
          <path d="M19 21q7-.500 9-5" stroke="#e0409c" strokeWidth="5" />
          <path d="M12.500 20L9.500 25" stroke="#2415a0" strokeWidth="5" />
        </svg>
      </DockApp>
      <DockApp $open $bg="#f3f5f7" aria-label="Telegram">
        <svg viewBox="0 0 36 36">
          <circle cx="18" cy="18" r="15" fill="#2fa1d8" />
          <path d="M8 18l19-7.500-3.500 16-6-4.200-3 3-1-5.500z" fill="#fff" />
          <path d="M13.500 19.800L24 13l-7.500 8.500-2 3.800z" fill="#c4dcec" />
        </svg>
      </DockApp>
      <DockApp $open $bg="#5057d6" aria-label="Discord">
        <DiscordFace />
        <Badge>52</Badge>
      </DockApp>
      <DockApp $open $bg="#021a30" $fg="#4ba6f5">Ps</DockApp>
      <DockApp $open $bg="#242325" aria-label="Figma">
        <svg viewBox="0 0 36 36">
          <rect x="9.500" y="5" width="17" height="8.500" rx="4.200" fill="#f3563c" />
          <path d="M18 5h4.300a4.200 4.200 0 0 1 0 8.500H18z" fill="#fa7362" />
          <path d="M18 13.500h-4.300a4.500 4.500 0 0 0 0 9H18z" fill="#9b51f0" />
          <circle cx="22.300" cy="18" r="4.300" fill="#3bb7f2" />
          <path d="M18 22.500h-4.300a4.500 4.500 0 1 0 4.300 4.500z" fill="#27cb7a" />
        </svg>
      </DockApp>
      <DockApp aria-label="Final Cut Pro">
        <svg viewBox="0 0 36 36">
          <defs>
            <linearGradient id="spectrum">
              <stop stopColor="#d8e83c" />
              <stop offset=".3" stopColor="#f6a33a" />
              <stop offset=".55" stopColor="#f24a55" />
              <stop offset="1" stopColor="#c22f9f" />
            </linearGradient>
            <linearGradient id="cool">
              <stop stopColor="#42d85c" />
              <stop offset=".5" stopColor="#b8f0ff" />
              <stop offset="1" stopColor="#3c50e8" />
            </linearGradient>
          </defs>
          <path d="M0 2L31-3q3 0 4 4l1 3v24q0 8-8 8H8q-8 0-8-8z" fill="#25262a" />
          <path d="M2 15h32v9H2z" fill="url(#spectrum)" />
          <path d="M2 24h32v4q0 6-6 6H8q-6 0-6-6z" fill="url(#cool)" />
          <path d="M1 6L6 1l3 4-4 2zM11 4.500L16-.500l3 4-4 1zM21 3L26-2l3 4-4 1zM1 13l5-5h5l-5 5zM12 13l5-5h5l-5 5zM23 13l5-5h5l-5 5z" fill="#e6e6e6" />
        </svg>
      </DockApp>
      <DockApp $open $bg="#fbfbfb" aria-label="Slack">
        <svg viewBox="0 0 36 36" strokeWidth="4.600" strokeLinecap="round">
          <path d="M8.500 15.500h6M14.500 8v.200" stroke="#36c5f0" />
          <path d="M21 8.500v6M27.500 15h.200" stroke="#2eb67d" />
          <path d="M21.500 21h6M21.500 27.500v.200" stroke="#ecb22e" />
          <path d="M15 21.500v6M8.500 21.500h.200" stroke="#e01e5a" />
        </svg>
      </DockApp>
      <DockApp $open $bg="#2c0303" $fg="#f89a1e">Ai</DockApp>
      <DockApp $open aria-label="Gravit">
        <svg viewBox="0 0 36 36">
          <path d="M18-4Q28-4 38 0 42 2 40 9 36 34 18 40 0 34-4 9-6 2-2 0 8-4 18-4z" fill="#ee6a22" />
          <path d="M18 0Q27 0 34 3 37 5 35 11 31 30 18 35 5 30 1 11-1 5 2 3 9 0 18 0z" fill="#33190f" />
          <text x="18" y="26" textAnchor="middle" fontSize="24" fontWeight="800" fill="#f37a35">G</text>
        </svg>
      </DockApp>
      <DockApp $open $bg="#3a62e6" aria-label="Signal">
        <svg viewBox="0 0 36 36">
          <path d="M7 30l1.500-6A11 11 0 1 1 13 28z" fill="#fff" />
          <circle cx="18" cy="18" r="13" fill="none" stroke="#fff" strokeWidth="1.300" strokeDasharray="4 1.500" />
        </svg>
      </DockApp>
      <DockRule />
      <DockApp as="a" href="#poster">
        <Poster>
          POST DU
          <br />
          CANCER
        </Poster>
      </DockApp>
      <DockApp aria-label="Corbeille">
        <svg viewBox="0 0 36 36">
          <path d="M3 0h30l-4 33q-1 4-11 4T7 33z" fill="#d4d6d8" />
          <path d="M9 8l2 25M18 8v27M27 8l-2 25" stroke="#dcdee0" strokeWidth="4" />
          <ellipse cx="18" cy="1" rx="15" ry="4.500" fill="#c0c3c6" />
          <path d="M4 1l5-4 5 3 5-4 5 3 6-1 2 4-7 4-6-2-6 3-5-3z" fill="#f2f2f2" />
          <path d="M9 0l3 3M17 1l3 2M24 0l2 3M13 4l3-2" stroke="#4a3a3c" strokeWidth="1.500" />
        </svg>
      </DockApp>
    </Dock>
  </DockArea>
);

const App = () => (
  <Desktop>
    <GlobalStyle />
    <TopMenu />
    <Window>
      <TitleBar>
        <Lights>
          <Light $dot />
          <Light />
          <Light />
        </Lights>
        Adobe Photoshop 2024
      </TitleBar>
      <Options />
      <Body>
        <ToolColumn>
          <Strip>»</Strip>
          <Tools>
            {tools.map(([label, icon, on]) => (
              <ToolButton key={label} $on={on} aria-label={label}>
                {icon}
              </ToolButton>
            ))}
          </Tools>
          <ToolExtras>
            <MiniRow>
              <Glyph size={9}>
                <path d="M5 5h6v6H5z" fill="#ccc" />
                <path d="M1 1h6v6H1z" fill="#000" />
              </Glyph>
              <Glyph size={9}>
                <path d="M3 3q6-1 6 6M1 3.500L4 1v5zM6.500 8h5L9 11z" fill="none" />
              </Glyph>
            </MiniRow>
            <ColorPair />
            <Glyph size={13}>
              <path d="M.8 1.500h10.400v9H.8z" />
              <circle cx="6" cy="6" r="2.600" />
            </Glyph>
            <Glyph size={13}>
              <path d="M4 1.500h7.200v5.500H4zM4 4H.8v6H8V7" />
            </Glyph>
          </ToolExtras>
        </ToolColumn>
        <Center>
          <DocTabs>
            <DocTab>
              <i>×</i>Sans titre-1 @ 100% (RVB/8)
            </DocTab>
            <DocTab $on>
              <i>×</i>Blue ballz.png @ 73,5% (PATTERN, RVB/8) *
            </DocTab>
          </DocTabs>
          <Workspace>
            <RulerX>
              {rulerX.map((n, i) => (
                <span key={i}>{n}</span>
              ))}
            </RulerX>
            <ScrollY>
              <div />
            </ScrollY>
            <RulerY>
              {rulerY.map((n, i) => (
                <span key={i}>{n}</span>
              ))}
            </RulerY>
            <Canvas>
              <Artboard>
                <Hexagon width="128" height="139" />
                <PatternWord>PATTERN</PatternWord>
              </Artboard>
              <Pointer width="10" height="15" viewBox="0 0 10 15">
                <path d="M1 1v11l2.600-2.300L5.400 14l2-.900-1.800-4H9z" fill="#222" stroke="#fff" />
              </Pointer>
            </Canvas>
            <StatusBar>
              <b>73,49 %</b>
              <span>470 px x 512 px (300 ppp)</span>
              <Glyph size={8}>
                <path d="M4 1q4 5 0 10" strokeWidth="1.800" />
              </Glyph>
              <ScrollX>
                <div />
              </ScrollX>
            </StatusBar>
          </Workspace>
        </Center>
        <IconDock>
          <Strip $align="right">«</Strip>
          <DockGroup>
            <OptButton aria-label="Historique">
              <Glyph size={13}>
                <path d="M1 1h3v2.500H1zM1 5h3v2.500H1z" />
                <path d="M.5 8.500h4V12h-4z" fill="currentColor" stroke="none" />
                <path d="M7 3h2q3 3 0 8M9 1L6.500 3 9 5.500" strokeWidth="1.400" />
              </Glyph>
            </OptButton>
            <OptButton aria-label="Commentaires">
              <Glyph size={13}>
                <path d="M.5 1.500h11V9H6l-3 3V9H.5z" fill="currentColor" stroke="none" />
              </Glyph>
            </OptButton>
          </DockGroup>
          <DockGroup>
            <OptButton aria-label="Informations">
              <Info size={13} />
            </OptButton>
          </DockGroup>
          <DockGroup>
            <OptButton aria-label="Caractère">A|</OptButton>
            <OptButton aria-label="Paragraphe">
              <Glyph size={12}>
                <path d="M5 1h5.500v1.300H10V11H8.700V2.300h-1V11H6.400V7H5a3 3 0 0 1 0-6z" fill="currentColor" stroke="none" />
              </Glyph>
            </OptButton>
          </DockGroup>
        </IconDock>
        <Panels>
          <div>
            <Strip $align="right">»</Strip>
            <ColorPanel />
          </div>
          <PropertiesPanel />
          <LayersPanel />
        </Panels>
      </Body>
    </Window>
    <AppDock />
    <ScreenRecorder />
  </Desktop>
);

export default App;
